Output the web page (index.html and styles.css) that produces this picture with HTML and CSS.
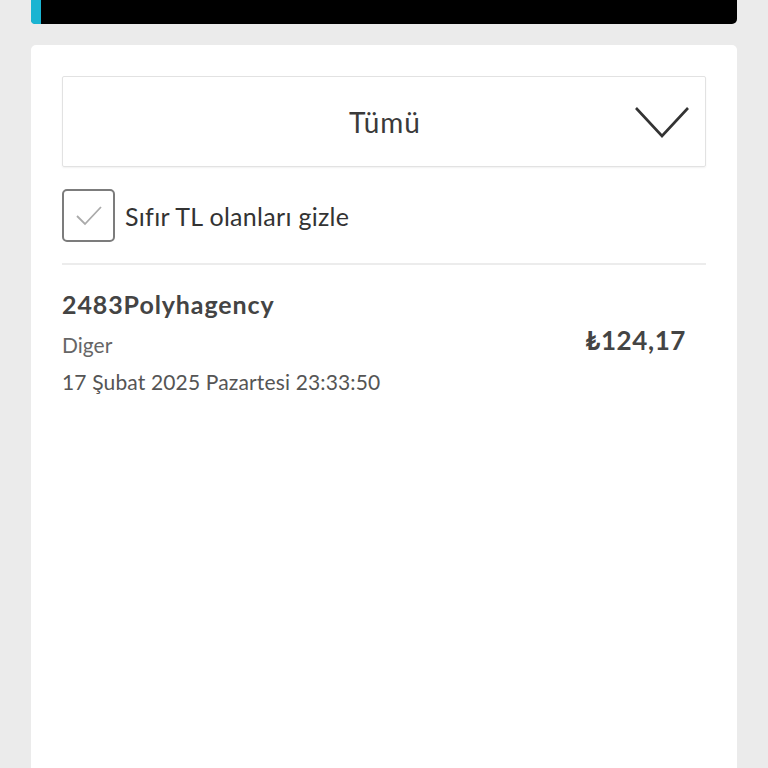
FILE: index.html
```
<!DOCTYPE html>
<html lang="tr">
<head>
<meta charset="utf-8">
<link rel="stylesheet" href="styles.css">
</head>
<body>
<div class="page">
  <div class="topbar"><div class="accent"></div></div>
  <div class="card">
    <div class="select">
      <span class="select-label">Tümü</span>
      <svg class="chevron" width="56" height="34" viewBox="0 0 56 34"><path d="M2 2 L28 30 L54 2" fill="none" stroke="#333" stroke-width="2.6"/></svg>
    </div>
    <label class="check-row">
      <span class="checkbox"><svg width="30" height="30" viewBox="0 0 30 30"><path d="M3 15 L11 23 L27 6" fill="none" stroke="#aaa" stroke-width="1.8"/></svg></span>
      <span class="check-label">Sıfır TL olanları gizle</span>
    </label>
    <div class="divider"></div>
    <div class="item">
      <div class="item-main">
        <div class="item-title">2483Polyhagency</div>
        <div class="item-sub">Diger</div>
        <div class="item-date">17 Şubat 2025 Pazartesi 23:33:50</div>
      </div>
      <div class="item-amount">₺124,17</div>
    </div>
  </div>
</div>
</body>
</html>
```
FILE: styles.css
```
html, body {
  margin: 0;
  padding: 0;
  background: #ebebeb;
  height: 768px;
  overflow: hidden;
}
body {
  font-family: "Lato", "Open Sans", sans-serif;
  color: #333;
}
.page {
  padding: 0 31px;
  display: flex;
  flex-direction: column;
  gap: 21px;
  height: 768px;
}
.topbar {
  height: 24px;
  flex: none;
  background: #000;
  border-radius: 0 0 5px 5px;
  display: flex;
}
.accent {
  width: 10px;
  background: #1ab4d2;
  border-radius: 0 0 0 4px;
}
.card {
  background: #fff;
  border-radius: 5px 5px 0 0;
  padding: 31px 31px 0;
  flex: 1;
  display: flex;
  flex-direction: column;
}
.select {
  height: 89px;
  border: 1px solid #e2e2e2;
  border-radius: 2px;
  box-shadow: 0 1px 2px rgba(0,0,0,0.06);
  position: relative;
  display: flex;
  align-items: center;
  justify-content: center;
}
.select-label {
  font-size: 28px;
  letter-spacing: 1px;
  color: #3a3a3a;
  margin-left: 2px;
}
.chevron {
  position: absolute;
  right: 15px;
  top: 29px;
}
.check-row {
  display: flex;
  align-items: center;
  gap: 10px;
  margin-top: 22px;
}
.checkbox {
  width: 49px;
  height: 49px;
  border: 2px solid #7c7c7c;
  border-radius: 5px;
  display: flex;
  align-items: center;
  justify-content: center;
}
.check-label {
  font-size: 25px;
  letter-spacing: 0.3px;
  color: #333;
}
.divider {
  height: 2px;
  background: #ececec;
  margin-top: 21px;
}
.item {
  display: flex;
  justify-content: space-between;
  align-items: center;
  padding: 24px 20px 0 0;
}
.item-title {
  font-size: 25px;
  font-weight: 700;
  letter-spacing: 0.9px;
  color: #444;
}
.item-sub {
  font-size: 21px;
  color: #666;
  margin-top: 13px;
}
.item-date {
  font-size: 21px;
  letter-spacing: 0.15px;
  color: #555;
  margin-top: 12px;
}
.item-amount {
  font-size: 26px;
  font-weight: 700;
  letter-spacing: 0.6px;
  color: #444;
  margin-top: -4px;
}
```
